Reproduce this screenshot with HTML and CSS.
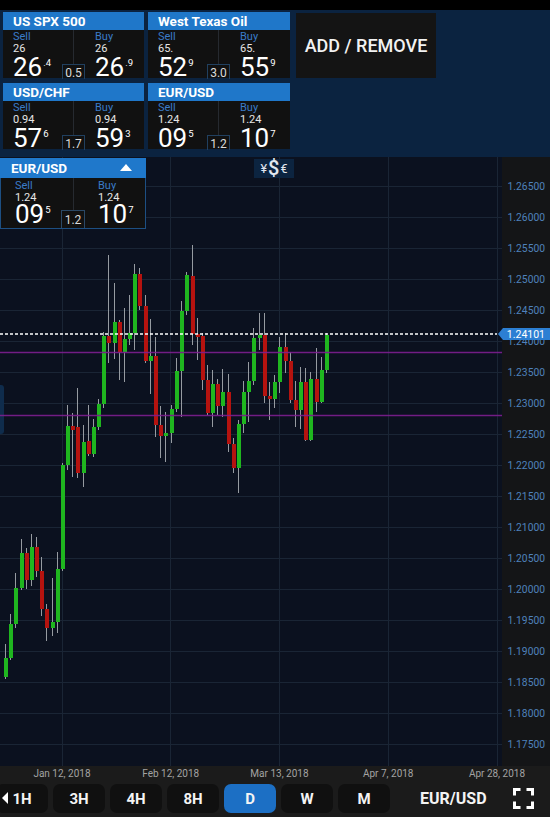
FILE: index.html
```html
<!DOCTYPE html>
<html>
<head>
<meta charset="utf-8">
<title>EUR/USD chart</title>
<link rel="stylesheet" href="styles.css">
</head>
<body>
<div class="topbar"></div>
<header class="header">
  <div class="tiles">
    <div class="tile">
      <div class="tile-title">US SPX 500</div>
      <div class="tile-body">
        <div class="side"><div class="lbl">Sell</div><div class="small">26</div><div class="big">26<span class="sup">.4</span></div></div>
        <div class="mid"><div class="rule"></div><div class="spread">0.5</div></div>
        <div class="side"><div class="lbl">Buy</div><div class="small">26</div><div class="big">26<span class="sup">.9</span></div></div>
      </div>
    </div>
    <div class="tile">
      <div class="tile-title">West Texas Oil</div>
      <div class="tile-body">
        <div class="side"><div class="lbl">Sell</div><div class="small">65.</div><div class="big">52<span class="sup">9</span></div></div>
        <div class="mid"><div class="rule"></div><div class="spread">3.0</div></div>
        <div class="side"><div class="lbl">Buy</div><div class="small">65.</div><div class="big">55<span class="sup">9</span></div></div>
      </div>
    </div>
    <div class="tile">
      <div class="tile-title">USD/CHF</div>
      <div class="tile-body">
        <div class="side"><div class="lbl">Sell</div><div class="small">0.94</div><div class="big">57<span class="sup">6</span></div></div>
        <div class="mid"><div class="rule"></div><div class="spread">1.7</div></div>
        <div class="side"><div class="lbl">Buy</div><div class="small">0.94</div><div class="big">59<span class="sup">3</span></div></div>
      </div>
    </div>
    <div class="tile">
      <div class="tile-title">EUR/USD</div>
      <div class="tile-body">
        <div class="side"><div class="lbl">Sell</div><div class="small">1.24</div><div class="big">09<span class="sup">5</span></div></div>
        <div class="mid"><div class="rule"></div><div class="spread">1.2</div></div>
        <div class="side"><div class="lbl">Buy</div><div class="small">1.24</div><div class="big">10<span class="sup">7</span></div></div>
      </div>
    </div>
  </div>
  <div class="addbtn">ADD / REMOVE</div>
</header>

<section class="chart">
  <svg class="plot" width="550" height="609" viewBox="0 157 550 609" xmlns="http://www.w3.org/2000/svg">
    <rect x="0" y="157" width="550" height="609" fill="#0b111f"/>
    <rect x="502" y="157" width="48" height="609" fill="#141517"/>
    <g stroke="#1a2535" stroke-width="1">
      <line x1="0" x2="502" y1="186.5" y2="186.5"/>
      <line x1="0" x2="502" y1="217.5" y2="217.5"/>
      <line x1="0" x2="502" y1="248.5" y2="248.5"/>
      <line x1="0" x2="502" y1="279.5" y2="279.5"/>
      <line x1="0" x2="502" y1="310.5" y2="310.5"/>
      <line x1="0" x2="502" y1="341.5" y2="341.5"/>
      <line x1="0" x2="502" y1="372.5" y2="372.5"/>
      <line x1="0" x2="502" y1="403.5" y2="403.5"/>
      <line x1="0" x2="502" y1="434.5" y2="434.5"/>
      <line x1="0" x2="502" y1="465.5" y2="465.5"/>
      <line x1="0" x2="502" y1="496.5" y2="496.5"/>
      <line x1="0" x2="502" y1="527.5" y2="527.5"/>
      <line x1="0" x2="502" y1="558.5" y2="558.5"/>
      <line x1="0" x2="502" y1="589.5" y2="589.5"/>
      <line x1="0" x2="502" y1="620.5" y2="620.5"/>
      <line x1="0" x2="502" y1="651.5" y2="651.5"/>
      <line x1="0" x2="502" y1="682.5" y2="682.5"/>
      <line x1="0" x2="502" y1="713.5" y2="713.5"/>
      <line x1="0" x2="502" y1="744.5" y2="744.5"/>
      <line x1="62.5" x2="62.5" y1="157" y2="766"/>
      <line x1="170.5" x2="170.5" y1="157" y2="766"/>
      <line x1="279.5" x2="279.5" y1="157" y2="766"/>
      <line x1="388.5" x2="388.5" y1="157" y2="766"/>
      <line x1="497.5" x2="497.5" y1="157" y2="766"/>
    </g>
    <g class="axis" fill="#4f82bc" font-size="10.3" text-anchor="end">
      <text x="545" y="190">1.26500</text>
      <text x="545" y="221">1.26000</text>
      <text x="545" y="252">1.25500</text>
      <text x="545" y="283">1.25000</text>
      <text x="545" y="314">1.24500</text>
      <text x="545" y="345">1.24000</text>
      <text x="545" y="376">1.23500</text>
      <text x="545" y="407">1.23000</text>
      <text x="545" y="438">1.22500</text>
      <text x="545" y="469">1.22000</text>
      <text x="545" y="500">1.21500</text>
      <text x="545" y="531">1.21000</text>
      <text x="545" y="562">1.20500</text>
      <text x="545" y="593">1.20000</text>
      <text x="545" y="624">1.19500</text>
      <text x="545" y="655">1.19000</text>
      <text x="545" y="686">1.18500</text>
      <text x="545" y="717">1.18000</text>
      <text x="545" y="748">1.17500</text>
    </g>
    <rect x="-3" y="385" width="7" height="49" rx="3" fill="#0f2c4c"/>
    <g stroke="#969ba1" stroke-width="1">
      <line x1="5.5" x2="5.5" y1="644" y2="679"/>
      <line x1="10.5" x2="10.5" y1="614" y2="660"/>
      <line x1="15.5" x2="15.5" y1="573" y2="628"/>
      <line x1="21.5" x2="21.5" y1="539" y2="590"/>
      <line x1="26.5" x2="26.5" y1="548" y2="589"/>
      <line x1="31.5" x2="31.5" y1="534" y2="586"/>
      <line x1="36.5" x2="36.5" y1="537" y2="577"/>
      <line x1="41.5" x2="41.5" y1="557" y2="616"/>
      <line x1="46.5" x2="46.5" y1="604" y2="641"/>
      <line x1="52.5" x2="52.5" y1="578" y2="636"/>
      <line x1="57.5" x2="57.5" y1="552" y2="633"/>
      <line x1="62.5" x2="62.5" y1="463" y2="571"/>
      <line x1="67.5" x2="67.5" y1="405" y2="470"/>
      <line x1="72.5" x2="72.5" y1="413" y2="477"/>
      <line x1="77.5" x2="77.5" y1="388" y2="478"/>
      <line x1="83.5" x2="83.5" y1="425" y2="487"/>
      <line x1="88.5" x2="88.5" y1="405" y2="456"/>
      <line x1="93.5" x2="93.5" y1="419" y2="457"/>
      <line x1="98.5" x2="98.5" y1="399" y2="430"/>
      <line x1="103.5" x2="103.5" y1="332" y2="408"/>
      <line x1="108.5" x2="108.5" y1="255" y2="363"/>
      <line x1="114.5" x2="114.5" y1="283" y2="359"/>
      <line x1="119.5" x2="119.5" y1="320" y2="380"/>
      <line x1="124.5" x2="124.5" y1="308" y2="382"/>
      <line x1="129.5" x2="129.5" y1="295" y2="345"/>
      <line x1="134.5" x2="134.5" y1="264" y2="350"/>
      <line x1="139.5" x2="139.5" y1="268" y2="310"/>
      <line x1="145.5" x2="145.5" y1="295" y2="363"/>
      <line x1="150.5" x2="150.5" y1="319" y2="394"/>
      <line x1="155.5" x2="155.5" y1="337" y2="437"/>
      <line x1="160.5" x2="160.5" y1="406" y2="458"/>
      <line x1="165.5" x2="165.5" y1="412" y2="462"/>
      <line x1="171.5" x2="171.5" y1="405" y2="443"/>
      <line x1="176.5" x2="176.5" y1="358" y2="412"/>
      <line x1="181.5" x2="181.5" y1="301" y2="417"/>
      <line x1="186.5" x2="186.5" y1="272" y2="315"/>
      <line x1="192.5" x2="192.5" y1="245" y2="345"/>
      <line x1="197.5" x2="197.5" y1="318" y2="360"/>
      <line x1="202.5" x2="202.5" y1="333" y2="390"/>
      <line x1="207.5" x2="207.5" y1="365" y2="415"/>
      <line x1="212.5" x2="212.5" y1="370" y2="427"/>
      <line x1="217.5" x2="217.5" y1="379" y2="415"/>
      <line x1="222.5" x2="222.5" y1="369" y2="417"/>
      <line x1="228.5" x2="228.5" y1="374" y2="452"/>
      <line x1="233.5" x2="233.5" y1="438" y2="473"/>
      <line x1="238.5" x2="238.5" y1="420" y2="493"/>
      <line x1="243.5" x2="243.5" y1="381" y2="433"/>
      <line x1="248.5" x2="248.5" y1="362" y2="422"/>
      <line x1="253.5" x2="253.5" y1="328" y2="385"/>
      <line x1="259.5" x2="259.5" y1="313" y2="350"/>
      <line x1="264.5" x2="264.5" y1="313" y2="403"/>
      <line x1="269.5" x2="269.5" y1="382" y2="420"/>
      <line x1="274.5" x2="274.5" y1="375" y2="408"/>
      <line x1="279.5" x2="279.5" y1="337" y2="393"/>
      <line x1="285.5" x2="285.5" y1="333" y2="373"/>
      <line x1="290.5" x2="290.5" y1="352" y2="403"/>
      <line x1="295.5" x2="295.5" y1="381" y2="427"/>
      <line x1="300.5" x2="300.5" y1="367" y2="429"/>
      <line x1="305.5" x2="305.5" y1="368" y2="441"/>
      <line x1="310.5" x2="310.5" y1="372" y2="441"/>
      <line x1="316.5" x2="316.5" y1="348" y2="412"/>
      <line x1="321.5" x2="321.5" y1="357" y2="403"/>
      <line x1="326.5" x2="326.5" y1="333" y2="373"/>
    </g>
    <g fill="#1fb61f">
      <rect x="4" y="658" width="4" height="19"/>
      <rect x="9" y="624" width="4" height="34"/>
      <rect x="14" y="588" width="4" height="36"/>
      <rect x="20" y="553" width="4" height="35"/>
      <rect x="30" y="547" width="4" height="33"/>
      <rect x="51" y="622" width="4" height="6"/>
      <rect x="56" y="569" width="4" height="53"/>
      <rect x="61" y="465" width="4" height="104"/>
      <rect x="66" y="426" width="4" height="39"/>
      <rect x="82" y="442" width="4" height="31"/>
      <rect x="92" y="427" width="4" height="27"/>
      <rect x="97" y="404" width="4" height="23"/>
      <rect x="102" y="336" width="4" height="68"/>
      <rect x="113" y="322" width="4" height="21"/>
      <rect x="123" y="339" width="4" height="13"/>
      <rect x="128" y="333" width="4" height="6"/>
      <rect x="133" y="274" width="4" height="59"/>
      <rect x="149" y="356" width="4" height="5"/>
      <rect x="164" y="433" width="4" height="3"/>
      <rect x="170" y="409" width="4" height="24"/>
      <rect x="175" y="371" width="4" height="38"/>
      <rect x="180" y="311" width="4" height="60"/>
      <rect x="185" y="275" width="4" height="36"/>
      <rect x="211" y="384" width="4" height="29"/>
      <rect x="221" y="392" width="4" height="14"/>
      <rect x="237" y="424" width="4" height="44"/>
      <rect x="242" y="392" width="4" height="32"/>
      <rect x="247" y="381" width="4" height="11"/>
      <rect x="252" y="338" width="4" height="43"/>
      <rect x="258" y="335" width="4" height="3"/>
      <rect x="273" y="382" width="4" height="17"/>
      <rect x="278" y="347" width="4" height="35"/>
      <rect x="299" y="382" width="4" height="28"/>
      <rect x="309" y="379" width="4" height="61"/>
      <rect x="320" y="370" width="4" height="32"/>
      <rect x="325" y="335" width="4" height="35"/>
    </g>
    <g fill="#b5130f">
      <rect x="25" y="553" width="4" height="27"/>
      <rect x="35" y="547" width="4" height="24"/>
      <rect x="40" y="571" width="4" height="38"/>
      <rect x="45" y="609" width="4" height="19"/>
      <rect x="71" y="426" width="4" height="4"/>
      <rect x="76" y="427" width="4" height="46"/>
      <rect x="87" y="441" width="4" height="13"/>
      <rect x="107" y="336" width="4" height="7"/>
      <rect x="118" y="322" width="4" height="30"/>
      <rect x="138" y="274" width="4" height="32"/>
      <rect x="144" y="306" width="4" height="55"/>
      <rect x="154" y="356" width="4" height="69"/>
      <rect x="159" y="425" width="4" height="11"/>
      <rect x="191" y="276" width="4" height="58"/>
      <rect x="196" y="334" width="4" height="3"/>
      <rect x="201" y="336" width="4" height="44"/>
      <rect x="206" y="380" width="4" height="33"/>
      <rect x="216" y="384" width="4" height="22"/>
      <rect x="227" y="392" width="4" height="52"/>
      <rect x="232" y="444" width="4" height="24"/>
      <rect x="263" y="335" width="4" height="61"/>
      <rect x="268" y="396" width="4" height="3"/>
      <rect x="284" y="347" width="4" height="14"/>
      <rect x="289" y="361" width="4" height="39"/>
      <rect x="294" y="400" width="4" height="10"/>
      <rect x="304" y="382" width="4" height="58"/>
      <rect x="315" y="379" width="4" height="23"/>
    </g>
    <g stroke="#7e1f8f" stroke-width="1.5" opacity="0.9">
      <line x1="0" x2="502" y1="352.5" y2="352.5"/>
      <line x1="0" x2="502" y1="415.5" y2="415.5"/>
    </g>
    <line x1="0" x2="497" y1="334" y2="334" stroke="#ffffff" stroke-width="1.5" stroke-dasharray="3 2"/>
    <polygon points="498,334 503,328 550,328 550,340 503,340" fill="#2c7fd3"/>
    <text x="545" y="338" fill="#ffffff" font-size="10.5" text-anchor="end" class="axis">1.24101</text>
  </svg>

  <div class="widget">
    <div class="widget-title">
      <span>EUR/USD</span>
      <svg class="caret" width="12" height="7" viewBox="0 0 12 7"><polygon points="0,7 6,0 12,7" fill="#ffffff"/></svg>
    </div>
    <div class="widget-body">
      <div class="wside"><div class="lbl">Sell</div><div class="small">1.24</div><div class="wbig">09<span class="sup">5</span></div></div>
      <div class="mid"><div class="rule"></div><div class="wspread">1.2</div></div>
      <div class="wside buyside"><div class="lbl">Buy</div><div class="small">1.24</div><div class="wbig">10<span class="sup">7</span></div></div>
    </div>
  </div>

  <div class="fx-badge"><span class="cur-s">¥</span><span class="cur-b">$</span><span class="cur-s">€</span></div>
</section>

<div class="dates">
  <span>Jan 12, 2018</span>
  <span>Feb 12, 2018</span>
  <span>Mar 13, 2018</span>
  <span>Apr 7, 2018</span>
  <span>Apr 28, 2018</span>
</div>

<nav class="toolbar">
  <span class="scroll-hint"></span>
  <div class="periods">
    <div class="period">1H</div>
    <div class="period">3H</div>
    <div class="period">4H</div>
    <div class="period">8H</div>
    <div class="period active">D</div>
    <div class="period">W</div>
    <div class="period">M</div>
  </div>
  <div class="pair">EUR/USD</div>
  <svg class="expand" width="21" height="21" viewBox="0 0 21 21">
    <g fill="none" stroke="#ffffff" stroke-width="3" stroke-linecap="butt">
      <path d="M1.5 7.5 V1.5 H7.5"/>
      <path d="M13.5 1.5 H19.5 V7.5"/>
      <path d="M19.5 13.5 V19.5 H13.5"/>
      <path d="M7.5 19.5 H1.5 V13.5"/>
    </g>
  </svg>
</nav>
</body>
</html>
```

FILE: styles.css
```css
* { box-sizing: border-box; }

html, body {
  margin: 0;
  padding: 0;
}

body {
  width: 550px;
  height: 817px;
  overflow: hidden;
  background: #0b111f;
  font-family: Roboto, "Noto Sans", "Liberation Sans", sans-serif;
  color: #fff;
}

.topbar {
  height: 10px;
  background: #000;
}

.header {
  height: 147px;
  background: #0b2340;
  padding: 2px 0 0 3px;
  display: flex;
  align-items: flex-start;
  gap: 6px;
}

.tiles {
  display: grid;
  grid-template-columns: 141px 142px;
  column-gap: 4px;
  row-gap: 5px;
}

.tile-title {
  height: 18px;
  padding: 1px 0 0 10px;
  background: #1f77c9;
  color: #fff;
  font-weight: 700;
  font-size: 13.5px;
  line-height: 17px;
  white-space: nowrap;
  overflow: hidden;
}

.tile-body {
  display: grid;
  grid-template-columns: 59px 23px 1fr;
  height: 48px;
  background: #111111;
}

.side {
  padding: 1px 0 0 10px;
  white-space: nowrap;
}

.lbl {
  font-size: 11px;
  line-height: 12px;
  color: #3a7bc8;
}

.small {
  font-size: 11px;
  line-height: 12px;
  color: #e6e6e6;
}

.big {
  font-size: 26px;
  line-height: 24px;
  color: #fff;
}

.sup {
  font-size: 9.5px;
  line-height: 0;
  vertical-align: 10px;
  margin-left: 1px;
}

.mid {
  display: flex;
  flex-direction: column;
  align-items: center;
}

.rule {
  flex: 1;
  width: 1px;
  background: #262a30;
}

.spread {
  width: 100%;
  height: 15px;
  border: 1px solid #21405f;
  border-bottom: 0;
  font-size: 12px;
  line-height: 16px;
  text-align: center;
  color: #dcdcdc;
}

.addbtn {
  margin-top: 1px;
  width: 140px;
  height: 65px;
  background: #141414;
  display: flex;
  align-items: center;
  justify-content: center;
  color: #f2f2f2;
  font-size: 18px;
  font-weight: 500;
}

.chart {
  position: relative;
  height: 609px;
}

.plot {
  display: block;
}

.axis {
  font-family: Roboto, "Noto Sans", sans-serif;
}

.widget {
  position: absolute;
  left: 0;
  top: 1px;
  width: 146px;
}

.widget-title {
  height: 20px;
  background: #1f78cb;
  display: flex;
  align-items: center;
  justify-content: space-between;
  padding: 0 14px 0 11px;
  font-weight: 700;
  font-size: 13.5px;
  line-height: 20px;
}

.widget-title .caret {
  display: block;
  margin-top: -2px;
}

.widget-body {
  display: grid;
  grid-template-columns: 60px 24px 1fr;
  height: 51px;
  background: #111111;
  border: 1px solid #1d4f82;
  border-top: 0;
}

.wside {
  padding: 2px 0 0 14px;
  white-space: nowrap;
}

.wside.buyside {
  padding-left: 13px;
}

.wbig {
  font-size: 26px;
  line-height: 21px;
  color: #fff;
}

.wspread {
  width: 100%;
  height: 18px;
  border: 1px solid #2a4866;
  border-bottom: 0;
  font-size: 12px;
  line-height: 18px;
  text-align: center;
  color: #dcdcdc;
}

.fx-badge {
  position: absolute;
  left: 254px;
  top: 2px;
  width: 40px;
  height: 19px;
  background: #0c2440;
  display: flex;
  align-items: center;
  justify-content: center;
  gap: 1px;
  color: #e2e8f0;
}

.cur-s {
  font-size: 12.5px;
  line-height: 19px;
}

.cur-b {
  font-size: 20px;
  line-height: 19px;
  font-weight: 500;
}

.dates {
  height: 16px;
  background: #1b1b1b;
  display: grid;
  grid-template-columns: repeat(5, 108.75px);
  padding-left: 7.6px;
  font-size: 10px;
  line-height: 16px;
  color: #a3a3a3;
  text-align: center;
  white-space: nowrap;
  overflow: hidden;
}

.toolbar {
  position: relative;
  height: 35px;
  background: #1b1b1b;
  padding-top: 2px;
  display: flex;
  align-items: flex-start;
  overflow: hidden;
}

.scroll-hint {
  position: absolute;
  left: 2px;
  top: 10px;
  width: 0;
  height: 0;
  border-top: 6px solid transparent;
  border-bottom: 6px solid transparent;
  border-right: 6px solid #ffffff;
  z-index: 2;
}

.periods {
  display: flex;
  gap: 5px;
  margin-left: -4px;
}

.period {
  width: 52px;
  height: 29px;
  border-radius: 7px;
  background: #101010;
  display: flex;
  align-items: center;
  justify-content: center;
  font-size: 15px;
  font-weight: 700;
  color: #f4f4f4;
}

.period.active {
  background: #1c6fc4;
}

.pair {
  margin-left: 30px;
  height: 29px;
  display: flex;
  align-items: center;
  font-size: 16px;
  font-weight: 700;
  color: #f4f4f4;
}

.expand {
  display: block;
  margin-left: 26px;
  margin-top: 4px;
}
```
